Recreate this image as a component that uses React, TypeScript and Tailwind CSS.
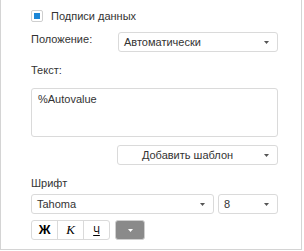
import React from 'react';

function Arrow({ className = '' }: { className?: string }) {
  return (
    <svg width="5" height="3" viewBox="0 0 5 3" className={className} aria-hidden>
      <path d="M0 0h5L2.5 3z" fill="currentColor" />
    </svg>
  );
}

function Select({ value, className = '', center = false, valueClass = '' }: {
  value: string; className?: string; center?: boolean; valueClass?: string;
}) {
  return (
    <div className={`flex h-[20px] items-center rounded-[3px] border border-[#dadada] bg-white pl-[5px] pr-[8px] ${className}`}>
      <span className={`flex-1 leading-none ${center ? 'text-center pr-[12px]' : ''} ${valueClass}`}>{value}</span>
      <Arrow className="text-[#555]" />
    </div>
  );
}

export default function App() {
  return (
    <div className="h-[250px] w-[302px] border-x border-b border-[#d4d4d4] bg-white pl-[30px] pt-[10px] text-[11px] text-[#333] font-['Liberation_Sans',Arial,sans-serif]">
      <label className="flex h-[12px] items-center gap-[8px]">
        <span className="flex h-[12px] w-[12px] items-center justify-center rounded-[2px] border border-[#cfcfcf] bg-white">
          <span className="h-[6px] w-[6px] bg-[#1c86d6]" />
        </span>
        <span className="leading-none">Подписи данных</span>
      </label>

      <div className="mt-[10px] flex w-[247px] items-start">
        <span className="w-[87px] pt-[1px] leading-[13px]">Положение:</span>
        <Select value="Автоматически" className="flex-1" />
      </div>

      <div className="mt-[12px] leading-[13px]">Текст:</div>

      <div className="mt-[11px] h-[49px] w-[247px] rounded-[3px] border border-[#dadada] px-[6px] pt-[4px] leading-[13px]">
        %Autovalue
      </div>

      <div className="mt-[8px] flex w-[247px] justify-end">
        <Select value="Добавить шаблон" center className="w-[161px]" />
      </div>

      <div className="mt-[12px] leading-[13px]">Шрифт</div>

      <div className="mt-[4px] flex w-[247px] gap-[4px]">
        <Select value="Tahoma" className="w-[183px]" />
        <Select value="8" className="flex-1" />
      </div>

      <div className="mt-[6px] flex items-center gap-[5px]">
        <div className="flex h-[20px] overflow-hidden rounded-[3px] border border-[#dadada]">
          <span className="flex w-[26px] items-center justify-center border-r border-[#dadada] text-[13px] font-bold text-black">Ж</span>
          <span className="flex w-[26px] items-center justify-center border-r border-[#dadada] text-[13px] italic font-['Liberation_Serif',serif] text-black">К</span>
          <span className="flex w-[25px] items-center justify-center text-[10px] underline text-black">Ч</span>
        </div>
        <div className="flex h-[20px] w-[30px] items-center justify-center rounded-[3px] border border-[#cfcfcf] bg-[#8a8a8a]">
          <Arrow className="text-white" />
        </div>
      </div>
    </div>
  );
}
